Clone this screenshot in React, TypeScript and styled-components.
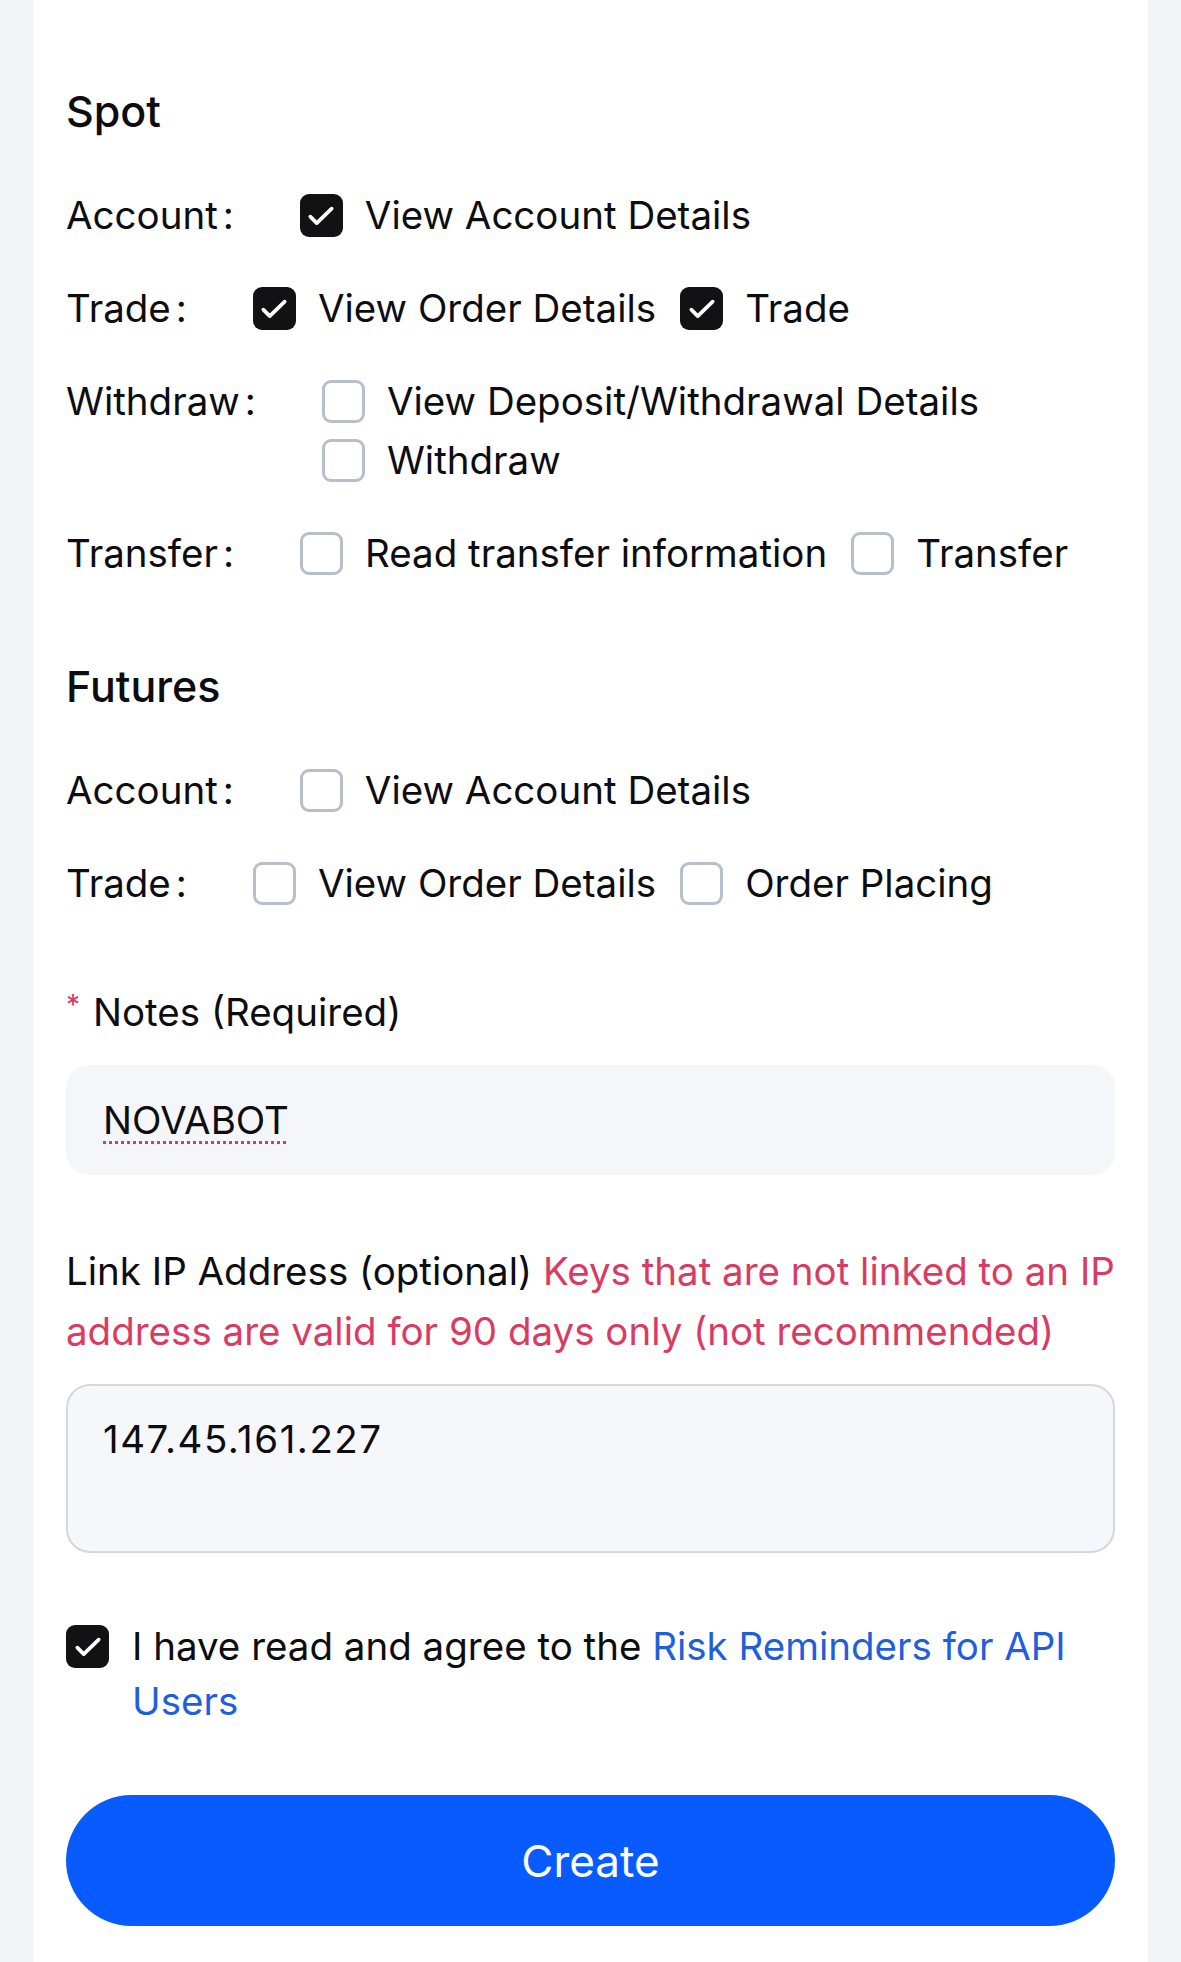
import React from "react";
import styled, { createGlobalStyle } from "styled-components";

const Global = createGlobalStyle`
  html, body { margin: 0; padding: 0; background: #f3f4f8; }
  body { font-family: Inter, "Noto Sans", "Liberation Sans", sans-serif; color: #0d0d10; }
  * { box-sizing: border-box; }
`;

const Page = styled.div`
  padding: 0 33px;
  min-height: 1962px;
`;

const Card = styled.div`
  background: #fff;
  min-height: 1962px;
  padding: 86px 33px 0 33px;
  display: flex;
  flex-direction: column;
`;

const Section = styled.section<{ $gapTop?: number }>`
  display: flex;
  flex-direction: column;
  margin-top: ${(p) => p.$gapTop ?? 0}px;
`;

const Heading = styled.h2`
  margin: 0 0 58px 0;
  font-size: 43px;
  line-height: 50px;
  font-weight: 500;
  color: #0d0d10;
`;

const Rows = styled.div`
  display: flex;
  flex-direction: column;
  gap: 50px;
`;

const Row = styled.div`
  display: flex;
  align-items: flex-start;
  gap: 66px;
`;

const Label = styled.div`
  font-size: 38.5px;
  line-height: 43px;
  white-space: nowrap;
  flex: none;
`;

const Colon = styled.span`
  margin-left: 5px;
`;

const Options = styled.div`
  display: flex;
  flex-wrap: wrap;
  column-gap: 24px;
  row-gap: 16px;
  flex: 1;
`;

const Option = styled.label`
  display: flex;
  align-items: center;
  gap: 22px;
  font-size: 38.5px;
  line-height: 43px;
  white-space: nowrap;
`;

const Box = styled.span<{ $checked?: boolean }>`
  width: 43px;
  height: 43px;
  flex: none;
  border-radius: 9px;
  display: inline-flex;
  align-items: center;
  justify-content: center;
  background: ${(p) => (p.$checked ? "#121214" : "#fff")};
  border: ${(p) => (p.$checked ? "none" : "3.5px solid #b7bfcb")};
`;

const Check = () => (
  <svg width="32" height="32" viewBox="0 0 24 24" fill="none">
    <path d="M4 12.5l4.8 4.8L20 6.5" stroke="#fff" strokeWidth="2.8" strokeLinecap="round" strokeLinejoin="round" />
  </svg>
);

const CheckBox = ({ checked }: { checked?: boolean }) => (
  <Box $checked={checked}>{checked && <Check />}</Box>
);

const FieldLabel = styled.div<{ $mt: number }>`
  margin-top: ${(p) => p.$mt}px;
  font-size: 38.5px;
  line-height: 50px;
  display: flex;
  align-items: flex-start;
`;

const Star = styled.span`
  color: #e0365f;
  font-size: 28px;
  line-height: 36px;
  margin-right: 13px;
  width: 14px;
`;

const NotesInput = styled.div`
  margin-top: 28px;
  height: 110px;
  background: #f5f6f9;
  border-radius: 22px;
  display: flex;
  align-items: center;
  padding: 0 37px;
  font-size: 38.5px;
`;

const Spell = styled.span`
  text-decoration: underline dotted #e0365f;
  text-decoration-thickness: 3px;
  text-underline-offset: 7px;
`;

const IpLabel = styled.div`
  margin-top: 66px;
  font-size: 38.5px;
  line-height: 60px;
`;

const Warn = styled.span`
  color: #d93b63;
`;

const IpArea = styled.div`
  margin-top: 23px;
  height: 169px;
  background: #f6f7fa;
  border: 2.5px solid #d3d7df;
  border-radius: 24px;
  padding: 28px 35px 0 35px;
  font-size: 38.5px;
  line-height: 50px;
  letter-spacing: 1.5px;
`;

const Agree = styled.div`
  margin-top: 66px;
  display: flex;
  align-items: flex-start;
  gap: 23px;
`;

const AgreeBox = styled.div`
  padding-top: 6px;
  flex: none;
`;

const AgreeText = styled.div`
  font-size: 38.5px;
  line-height: 55px;
`;

const Link = styled.a`
  color: #1f5fdc;
  text-decoration: none;
`;

const CreateButton = styled.button`
  margin-top: 66px;
  height: 131px;
  width: 100%;
  border: none;
  border-radius: 66px;
  background: #085bff;
  color: #fff;
  font-family: inherit;
  font-size: 44px;
  font-weight: 400;
`;

type Opt = { text: string; checked?: boolean };
type RowDef = { label: string; options: Opt[] };

const spot: RowDef[] = [
  { label: "Account", options: [{ text: "View Account Details", checked: true }] },
  {
    label: "Trade",
    options: [
      { text: "View Order Details", checked: true },
      { text: "Trade", checked: true },
    ],
  },
  {
    label: "Withdraw",
    options: [{ text: "View Deposit/Withdrawal Details" }, { text: "Withdraw" }],
  },
  {
    label: "Transfer",
    options: [{ text: "Read transfer information" }, { text: "Transfer" }],
  },
];

const futures: RowDef[] = [
  { label: "Account", options: [{ text: "View Account Details" }] },
  {
    label: "Trade",
    options: [{ text: "View Order Details" }, { text: "Order Placing" }],
  },
];

const PermRows = ({ rows }: { rows: RowDef[] }) => (
  <Rows>
    {rows.map((r) => (
      <Row key={r.label}>
        <Label>
          {r.label}
          <Colon>:</Colon>
        </Label>
        <Options>
          {r.options.map((o) => (
            <Option key={o.text}>
              <CheckBox checked={o.checked} />
              {o.text}
            </Option>
          ))}
        </Options>
      </Row>
    ))}
  </Rows>
);

export default function App() {
  return (
    <>
      <Global />
      <Page>
        <Card>
          <Section>
            <Heading>Spot</Heading>
            <PermRows rows={spot} />
          </Section>
          <Section $gapTop={86}>
            <Heading>Futures</Heading>
            <PermRows rows={futures} />
          </Section>
          <FieldLabel $mt={82}>
            <Star>*</Star>
            Notes (Required)
          </FieldLabel>
          <NotesInput>
            <Spell>NOVABOT</Spell>
          </NotesInput>
          <IpLabel>
            Link IP Address (optional){" "}
            <Warn>Keys that are not linked to an IP address are valid for 90 days only (not recommended)</Warn>
          </IpLabel>
          <IpArea>147.45.161.227</IpArea>
          <Agree>
            <AgreeBox>
              <CheckBox checked />
            </AgreeBox>
            <AgreeText>
              I have read and agree to the <Link>Risk Reminders for API Users</Link>
            </AgreeText>
          </Agree>
          <CreateButton>Create</CreateButton>
        </Card>
      </Page>
    </>
  );
}
